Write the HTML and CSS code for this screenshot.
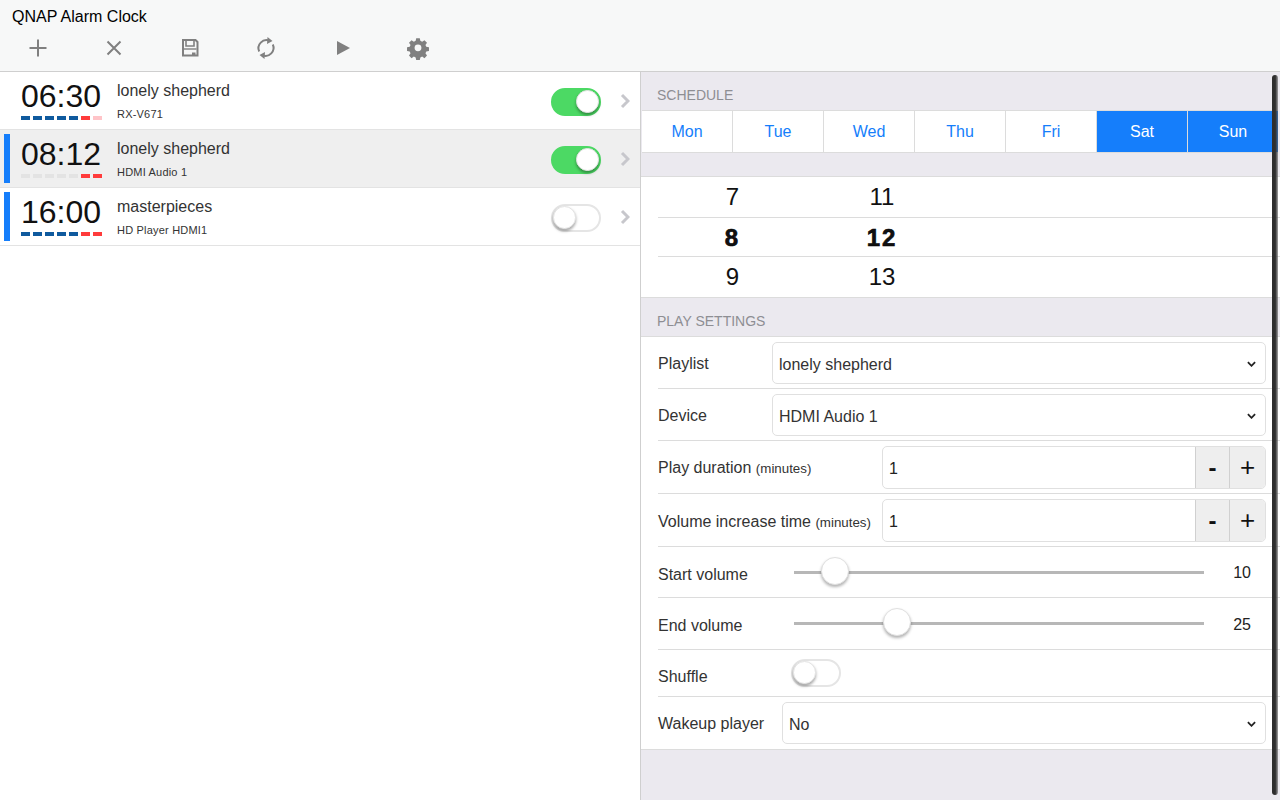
FILE: index.html
```html
<!DOCTYPE html>
<html>
<head>
    <title>QNAP Alarm Clock</title>
    <link rel="stylesheet" href="styles.css">
</head>
<body>
    <div class="toolbar">
        <div class="app-title">QNAP Alarm Clock</div>
        <div class="tools">
            <svg class="tool" viewBox="0 0 24 24"><path d="M12 3.500v17M3.500 12h17" stroke="#808080" stroke-width="2" fill="none"/></svg>
            <svg class="tool" viewBox="0 0 24 24"><path d="M5.500 5.500l13 13M18.500 5.500l-13 13" stroke="#808080" stroke-width="2" fill="none"/></svg>
            <svg class="tool" viewBox="0 0 24 24"><path d="M5 4h12.500l2 2v13.500h-14.500z" stroke="#808080" stroke-width="2" fill="none"/><path d="M8 4.500v5.500h8V4.500" stroke="#808080" stroke-width="1.600" fill="none"/><path d="M6 13h12.500" stroke="#808080" stroke-width="1.400" fill="none"/><path d="M14 16.500h3.500v3h-3.500z" fill="#808080"/></svg>
            <svg class="tool" viewBox="0 0 24 24"><path d="M5.200 15.500A8 8 0 0 1 15.500 4.800M18.800 8.500A8 8 0 0 1 8.500 19.200" stroke="#808080" stroke-width="2" fill="none"/><path d="M13.500 1l5 4-5.500 3zM10.500 23l-5-4 5.500-3z" fill="#808080"/></svg>
            <svg class="tool play" viewBox="0 0 24 24"><path d="M6 5l13 7-13 7z" fill="#808080"/></svg>
            <svg class="tool" viewBox="0 0 24 24"><path fill="#808080" fill-rule="evenodd" d="M10 1.500h4l.6 3 2 .9 2.600-1.700 2.800 2.800-1.700 2.600.9 2 3 .6v4l-3 .6-.9 2 1.700 2.600-2.800 2.800-2.600-1.700-2 .9-.6 3h-4l-.6-3-2-.9-2.600 1.700-2.800-2.800 1.700-2.600-.9-2-3-.6v-4l3-.6.9-2-1.700-2.600 2.800-2.800 2.600 1.700 2-.9zM12 8.500a3.800 3.800 0 1 0 0 7.600 3.800 3.800 0 0 0 0-7.600z" transform="translate(1.200 .8) scale(.9)"/></svg>
        </div>
    </div>

    <div class="main">
        <div class="alarm-list">
            <div class="alarm">
                <div class="alarm-time">
                    <div class="time">06:30</div>
                    <div class="days">
                        <i class="wd"></i><i class="wd"></i><i class="wd"></i><i class="wd"></i><i class="wd"></i><i class="we"></i><i class="we-off"></i>
                    </div>
                </div>
                <div class="alarm-info">
                    <div class="alarm-name">lonely shepherd</div>
                    <div class="alarm-device">RX-V671</div>
                </div>
                <div class="switch on"><span class="knob"></span></div>
                <svg class="chevron" viewBox="0 0 10 16"><path d="M2 2l6 6-6 6" stroke="#c7c7cc" stroke-width="3" fill="none"/></svg>
            </div>
            <div class="alarm selected">
                <div class="marker"></div>
                <div class="alarm-time">
                    <div class="time">08:12</div>
                    <div class="days">
                        <i class="off"></i><i class="off"></i><i class="off"></i><i class="off"></i><i class="off"></i><i class="we"></i><i class="we"></i>
                    </div>
                </div>
                <div class="alarm-info">
                    <div class="alarm-name">lonely shepherd</div>
                    <div class="alarm-device">HDMI Audio 1</div>
                </div>
                <div class="switch on"><span class="knob"></span></div>
                <svg class="chevron" viewBox="0 0 10 16"><path d="M2 2l6 6-6 6" stroke="#c7c7cc" stroke-width="3" fill="none"/></svg>
            </div>
            <div class="alarm">
                <div class="marker"></div>
                <div class="alarm-time">
                    <div class="time">16:00</div>
                    <div class="days">
                        <i class="wd"></i><i class="wd"></i><i class="wd"></i><i class="wd"></i><i class="wd"></i><i class="we"></i><i class="we"></i>
                    </div>
                </div>
                <div class="alarm-info">
                    <div class="alarm-name">masterpieces</div>
                    <div class="alarm-device">HD Player HDMI1</div>
                </div>
                <div class="switch"><span class="knob"></span></div>
                <svg class="chevron" viewBox="0 0 10 16"><path d="M2 2l6 6-6 6" stroke="#c7c7cc" stroke-width="3" fill="none"/></svg>
            </div>
        </div>

        <div class="detail">
            <div class="section-title">SCHEDULE</div>
            <div class="week">
                <div class="day">Mon</div>
                <div class="day">Tue</div>
                <div class="day">Wed</div>
                <div class="day">Thu</div>
                <div class="day">Fri</div>
                <div class="day active">Sat</div>
                <div class="day active">Sun</div>
            </div>
            <div class="picker">
                <div class="picker-row"><span class="hour">7</span><span class="minute">11</span></div>
                <div class="picker-row current"><span class="hour">8</span><span class="minute">12</span></div>
                <div class="picker-row"><span class="hour">9</span><span class="minute">13</span></div>
            </div>
            <div class="section-title">PLAY SETTINGS</div>
            <div class="form">
                <div class="row row-select">
                    <div class="label label-short">Playlist</div>
                    <div class="select">lonely shepherd<svg class="caret" viewBox="0 0 10 6"><path d="M1 1l4 4 4-4" stroke="#222" stroke-width="2" fill="none"/></svg></div>
                </div>
                <div class="row row-select">
                    <div class="label label-short">Device</div>
                    <div class="select">HDMI Audio 1<svg class="caret" viewBox="0 0 10 6"><path d="M1 1l4 4 4-4" stroke="#222" stroke-width="2" fill="none"/></svg></div>
                </div>
                <div class="row row-stepper">
                    <div class="label label-wide">Play duration <small>(minutes)</small></div>
                    <div class="stepper"><div class="value">1</div><div class="step">-</div><div class="step step-plus">+</div></div>
                </div>
                <div class="row row-stepper">
                    <div class="label label-wide">Volume increase time <small>(minutes)</small></div>
                    <div class="stepper"><div class="value">1</div><div class="step">-</div><div class="step step-plus">+</div></div>
                </div>
                <div class="row row-slider">
                    <div class="label label-slider">Start volume</div>
                    <div class="slider"><span class="thumb" style="left: 10%"></span></div>
                    <div class="slider-value">10</div>
                </div>
                <div class="row row-slider tall">
                    <div class="label label-slider">End volume</div>
                    <div class="slider"><span class="thumb" style="left: 25%"></span></div>
                    <div class="slider-value">25</div>
                </div>
                <div class="row row-switch">
                    <div class="label label-slider">Shuffle</div>
                    <div class="switch"><span class="knob"></span></div>
                </div>
                <div class="row row-select last">
                    <div class="label label-wakeup">Wakeup player</div>
                    <div class="select">No<svg class="caret" viewBox="0 0 10 6"><path d="M1 1l4 4 4-4" stroke="#222" stroke-width="2" fill="none"/></svg></div>
                </div>
            </div>
        </div>
    </div>
    <div class="scrollbar"></div>
</body>
</html>
```
FILE: styles.css
```css
* {
    box-sizing: border-box;
}

body {
    margin: 0;
    height: 800px;
    overflow: hidden;
    display: flex;
    flex-direction: column;
    background-color: #fff;
    font-family: "Liberation Sans", sans-serif;
    font-size: 16px;
    color: #222;
}

.toolbar {
    height: 72px;
    flex: none;
    background-color: #f7f8f8;
    border-bottom: 1px solid #cfcfcf;
}

.app-title {
    padding: 8px 0 0 12px;
    line-height: 18px;
    color: #000;
}

.tools {
    display: flex;
    margin-top: 10px;
    padding-left: 26px;
    gap: 52px;
}

.tool {
    width: 24px;
    height: 24px;
    display: block;
}

.tool.play {
    transform: translateX(1px);
}

.main {
    flex: 1;
    display: flex;
    min-height: 0;
}

/* list on the left */
.alarm-list {
    width: 640px;
    flex: none;
}

.alarm {
    position: relative;
    height: 58px;
    display: flex;
    align-items: center;
    border-bottom: 1px solid #e3e3e3;
    padding-left: 21px;
}

.alarm.selected {
    background-color: #efefef;
}

.marker {
    position: absolute;
    left: 4px;
    top: 4px;
    width: 6px;
    height: 49px;
    background-color: #157efb;
}

.alarm-time {
    width: 96px;
    flex: none;
    align-self: flex-start;
    padding-top: 6px;
}

.time {
    font-size: 32px;
    line-height: 36px;
    width: 80px;
    text-align: center;
    color: #111;
}

.days {
    display: flex;
    gap: 3px;
    margin-top: 2px;
}

.days i {
    display: block;
    width: 9px;
    height: 4px;
}

.days .wd {
    background-color: #0f5a9e;
}

.days .we {
    background-color: #ff3b3b;
}

.days .we-off {
    background-color: #ffc4c8;
}

.days .off {
    background-color: #e3e3e3;
}

.alarm-info {
    flex: 1;
    color: #333;
}

.alarm-name {
    line-height: 18px;
    margin-top: 1px;
}

.alarm-device {
    font-size: 11px;
    line-height: 13px;
    margin-top: 8px;
    letter-spacing: .2px;
}

.switch {
    position: relative;
    width: 50px;
    height: 28px;
    flex: none;
    border-radius: 14px;
    border: 2px solid #e5e5e5;
    background-color: #fff;
}

.alarm .switch {
    margin: 2px -1px 0 1px;
}

.switch.on {
    background-color: #4cd964;
    border-color: #4cd964;
}

.knob {
    position: absolute;
    left: 0;
    top: 0;
    width: 23px;
    height: 23px;
    border-radius: 50%;
    background-color: #fff;
    border: 1px solid #e4e4e4;
    box-shadow: 0 2px 3px rgba(0, 0, 0, .35);
}

.switch.on .knob {
    left: 23px;
}

.chevron {
    width: 10px;
    height: 16px;
    margin: 0 10px 0 20px;
    flex: none;
}

/* right panel */
.detail {
    flex: 1;
    background-color: #ebe9ef;
    border-left: 1px solid #cfcfcf;
}

.section-title {
    font-size: 14px;
    line-height: 16px;
    color: #8e8e93;
    padding: 15px 0 0 16px;
    height: 38px;
}

.week {
    display: flex;
    height: 43px;
    margin-left: 1px;
    margin-right: 2px;
    background-color: #fff;
    border-top: 1px solid #dcdcdc;
    border-bottom: 1px solid #dcdcdc;
}

.day {
    flex: 1;
    display: flex;
    align-items: center;
    justify-content: center;
    color: #157efb;
    border-right: 1px solid #dcdcdc;
}

.day:last-child {
    border-right: none;
}

.day.active {
    background-color: #157efb;
    color: #fff;
}

.picker {
    margin-top: 23px;
    background-color: #fff;
    border-top: 1px solid #dcdcdc;
    border-bottom: 1px solid #dcdcdc;
    padding-left: 17px;
    height: 122px;
}

.picker-row {
    display: flex;
    height: 40px;
    align-items: center;
    font-size: 24px;
    color: #111;
}

.picker-row.current {
    font-weight: bold;
    border-top: 1px solid #dcdcdc;
    border-bottom: 1px solid #dcdcdc;
    padding-top: 2px;
    letter-spacing: 2px;
    -webkit-text-stroke: .6px #000;
}

.hour {
    width: 149px;
    text-align: center;
}

.minute {
    width: 150px;
    text-align: center;
}

.form {
    background-color: #fff;
    border-top: 1px solid #dcdcdc;
    border-bottom: 1px solid #dcdcdc;
    padding-left: 17px;
}

.row {
    display: flex;
    align-items: center;
    padding-right: 14px;
    border-bottom: 1px solid #dcdcdc;
}

.row.last {
    border-bottom: none;
}

.row-select {
    height: 52px;
}

.row-stepper {
    height: 53px;
}

.row-slider {
    height: 51px;
}

.row-slider.tall {
    height: 52px;
}

.row-switch {
    height: 47px;
}

.label {
    flex: none;
    color: #333;
}

.label small {
    font-size: 13.330px;
}

.label-short {
    width: 114px;
    margin-top: 2px;
}

.label-wide {
    width: 224px;
    margin-top: 2px;
}

.row-stepper + .row-stepper .label-wide {
    margin-top: 4px;
}

.label-slider {
    width: 133px;
    margin-top: 6px;
}

.row-slider.tall .label-slider {
    margin-top: 4px;
}

.row-switch .label-slider {
    margin-top: 8px;
}

.label-wakeup {
    width: 124px;
    margin-top: 2px;
}

.select {
    flex: 1;
    height: 42px;
    display: flex;
    align-items: center;
    justify-content: space-between;
    border: 1px solid #e0e0e0;
    border-radius: 5px;
    padding: 4px 9px 0 6px;
    color: #333;
}

.caret {
    width: 9px;
    height: 6px;
    margin-bottom: 2px;
}

.stepper {
    flex: 1;
    height: 43px;
    display: flex;
    border: 1px solid #e0e0e0;
    border-radius: 5px;
    overflow: hidden;
}

.value {
    flex: 1;
    padding-left: 6px;
    line-height: 43px;
}

.step {
    width: 34px;
    text-align: center;
    background-color: #eee;
    border-left: 1px solid #d0d0d0;
    font-weight: bold;
    font-size: 24px;
    line-height: 42px;
    color: #111;
}

.step-plus {
    width: 36px;
    font-weight: normal;
    font-size: 26px;
    line-height: 40px;
}

.slider {
    position: relative;
    width: 410px;
    height: 3px;
    background-color: #b7b7b7;
    flex: none;
    margin-left: 3px;
}

.thumb {
    position: absolute;
    top: -14px;
    width: 28px;
    height: 28px;
    margin-left: -14px;
    border-radius: 50%;
    background-color: #fff;
    border: 1px solid #e0e0e0;
    box-shadow: 0 2px 3px rgba(0, 0, 0, .3);
}

.slider-value {
    width: 50px;
    margin-top: 2px;
    text-align: right;
    padding-right: 3px;
}

.scrollbar {
    position: absolute;
    left: 1272px;
    top: 75px;
    width: 6px;
    height: 720px;
    border-radius: 3px;
    background: linear-gradient(to right, #2e2e2e 55%, rgba(90, 90, 90, .55));
}
```
